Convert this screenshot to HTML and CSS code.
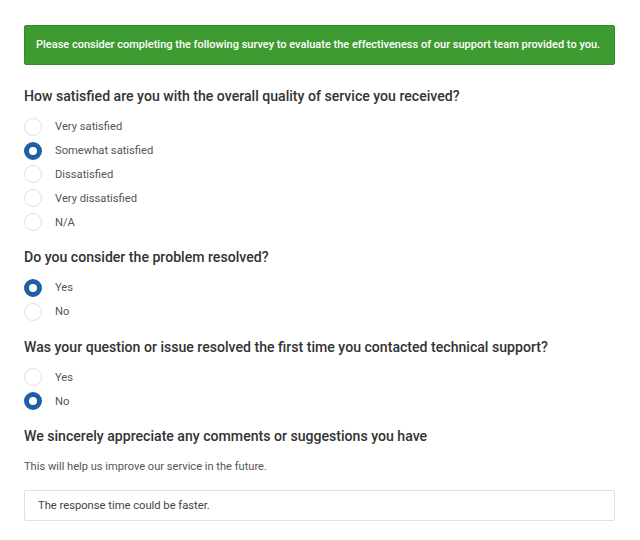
FILE: index.html
```html
<!DOCTYPE html>
<html>
<head>
<meta charset="utf-8">
<link rel="stylesheet" href="styles.css">
</head>
<body>
<div class="page">
  <div class="banner">Please consider completing the following survey to evaluate the effectiveness of our support team provided to you.</div>

  <div class="question">
    <h2 class="q-title">How satisfied are you with the overall quality of service you received?</h2>
    <div class="options">
      <label class="option"><span class="radio"></span><span class="label">Very satisfied</span></label>
      <label class="option"><span class="radio checked"></span><span class="label">Somewhat satisfied</span></label>
      <label class="option"><span class="radio"></span><span class="label">Dissatisfied</span></label>
      <label class="option"><span class="radio"></span><span class="label">Very dissatisfied</span></label>
      <label class="option"><span class="radio"></span><span class="label">N/A</span></label>
    </div>
  </div>

  <div class="question">
    <h2 class="q-title">Do you consider the problem resolved?</h2>
    <div class="options">
      <label class="option"><span class="radio checked"></span><span class="label">Yes</span></label>
      <label class="option"><span class="radio"></span><span class="label">No</span></label>
    </div>
  </div>

  <div class="question">
    <h2 class="q-title">Was your question or issue resolved the first time you contacted technical support?</h2>
    <div class="options">
      <label class="option"><span class="radio"></span><span class="label">Yes</span></label>
      <label class="option"><span class="radio checked"></span><span class="label">No</span></label>
    </div>
  </div>

  <div class="question">
    <h2 class="q-title">We sincerely appreciate any comments or suggestions you have</h2>
    <p class="desc">This will help us improve our service in the future.</p>
    <div class="input">The response time could be faster.</div>
  </div>
</div>
</body>
</html>
```

FILE: styles.css
```css
html, body {
  margin: 0;
  padding: 0;
  background: #ffffff;
}
body {
  font-family: Roboto, "Liberation Sans", Arial, sans-serif;
  color: #333;
}
.page {
  padding: 25px 25px 0 24px;
  display: flex;
  flex-direction: column;
}
.banner {
  background: #3e9b32;
  border: 1px solid #368a2b;
  border-radius: 2px;
  color: #ffffff;
  font-size: 11px;
  font-weight: 500;
  white-space: nowrap;
  overflow: hidden;
  height: 38px;
  line-height: 38px;
  padding: 0 11px;
  margin-bottom: 21px;
}
.question {
  margin-bottom: 13px;
}
.q-title {
  margin: 0 0 9px 0;
  font-size: 14.1px;
  font-weight: 500;
  line-height: 20px;
  color: #333;
}
.options {
  display: flex;
  flex-direction: column;
}
.option {
  display: flex;
  align-items: center;
  height: 23.8px;
}
.radio {
  width: 18px;
  height: 18px;
  box-sizing: border-box;
  border-radius: 50%;
  border: 1px solid #dfe1e8;
  background: #fff;
  margin-right: 13px;
  flex-shrink: 0;
}
.radio.checked {
  border: 5px solid #1d5fa5;
}
.label {
  font-size: 11.2px;
  color: #555;
}
.desc {
  margin: 12.5px 0 15px 0;
  font-size: 11.1px;
  line-height: 16px;
  color: #555;
}
.input {
  border: 1px solid #dfe1e8;
  border-radius: 2px;
  height: 29px;
  line-height: 29px;
  padding: 0 13px;
  font-size: 11.2px;
  color: #444;
}
```
